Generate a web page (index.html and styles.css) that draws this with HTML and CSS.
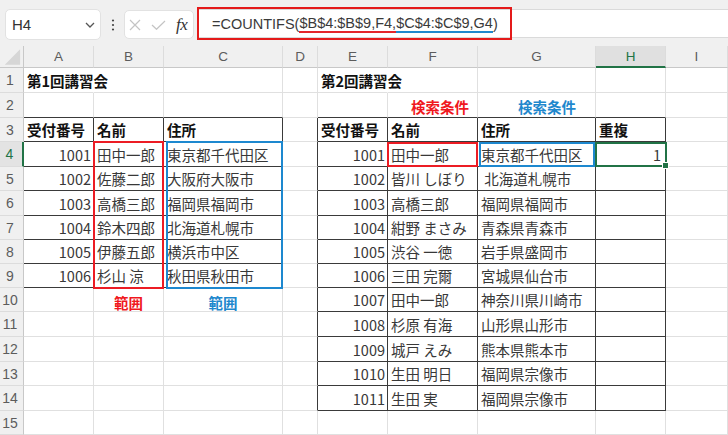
FILE: index.html
```html
<!DOCTYPE html>
<html lang="ja">
<head>
<meta charset="utf-8">
<title>COUNTIFS</title>
<link rel="stylesheet" href="styles.css">
</head>
<body>
<div class="toolbar">
  <div class="namebox"><span>H4</span><svg width="10" height="6" viewBox="0 0 10 6"><path d="M1 1l4 4 4-4" fill="none" stroke="#555" stroke-width="1.3"/></svg></div>
  <div class="dots"><svg width="4" height="12" viewBox="0 0 4 12"><circle cx="2" cy="1.5" r="1.1" fill="#444"/><circle cx="2" cy="6" r="1.1" fill="#444"/><circle cx="2" cy="10.5" r="1.1" fill="#444"/></svg></div>
  <div class="fxgroup">
    <svg class="ic-x" width="12" height="12" viewBox="0 0 12 12"><path d="M1 1L11 11M11 1L1 11" fill="none" stroke="#c4c4c4" stroke-width="1.2"/></svg>
    <svg class="ic-ok" width="15" height="10" viewBox="0 0 15 10"><path d="M1 5l4.5 4.3L14 1" fill="none" stroke="#c4c4c4" stroke-width="1.2"/></svg>
    <span class="fx">fx</span>
  </div>
  <div class="formula">=COUNTIFS(<span class="u-red">$B$4:$B$9,F4,</span><span class="u-blue">$C$4:$C$9,G4</span>)<div class="annot"></div></div>
</div>

<div class="sheet-wrap">
<div class="sheet">
  <div class="h corner"><svg width="24" height="22" viewBox="0 0 24 22"><polygon points="21,3 21,19 5,19" fill="#d6d6d6"/></svg></div>
  <div class="h">A</div><div class="h">B</div><div class="h">C</div><div class="h">D</div><div class="h">E</div><div class="h">F</div><div class="h">G</div><div class="h sel">H</div><div class="h">I</div>

  <div class="rh">1</div>
  <div class="c ov b">第1回講習会</div><div class="c"></div><div class="c"></div><div class="c"></div>
  <div class="c ov b">第2回講習会</div><div class="c"></div><div class="c"></div><div class="c"></div><div class="c"></div>

  <div class="rh">2</div>
  <div class="c tb"></div><div class="c tb"></div><div class="c tb"></div><div class="c"></div>
  <div class="c tb"></div><div class="c tb lbl2 red pf">検索条件</div><div class="c tb lbl2 blue pg">検索条件</div><div class="c tb"></div><div class="c"></div>

  <div class="rh">3</div>
  <div class="c t b">受付番号</div><div class="c t b">名前</div><div class="c t b">住所</div><div class="c tl"></div>
  <div class="c t b">受付番号</div><div class="c t b">名前</div><div class="c t b">住所</div><div class="c t b">重複</div><div class="c"></div>

  <div class="rh sel">4</div>
  <div class="c t n">1001</div><div class="c t">田中一郎</div><div class="c t">東京都千代田区</div><div class="c tl"></div>
  <div class="c t n">1001</div><div class="c t">田中一郎</div><div class="c t">東京都千代田区</div><div class="c t n hv">1</div><div class="c"></div>

  <div class="rh">5</div>
  <div class="c t n">1002</div><div class="c t">佐藤二郎</div><div class="c t">大阪府大阪市</div><div class="c tl"></div>
  <div class="c t n">1002</div><div class="c t">皆川 しぼり</div><div class="c t"> 北海道札幌市</div><div class="c t"></div><div class="c"></div>

  <div class="rh">6</div>
  <div class="c t n">1003</div><div class="c t">高橋三郎</div><div class="c t">福岡県福岡市</div><div class="c tl"></div>
  <div class="c t n">1003</div><div class="c t">高橋三郎</div><div class="c t">福岡県福岡市</div><div class="c t"></div><div class="c"></div>

  <div class="rh">7</div>
  <div class="c t n">1004</div><div class="c t">鈴木四郎</div><div class="c t">北海道札幌市</div><div class="c tl"></div>
  <div class="c t n">1004</div><div class="c t">紺野 まさみ</div><div class="c t">青森県青森市</div><div class="c t"></div><div class="c"></div>

  <div class="rh">8</div>
  <div class="c t n">1005</div><div class="c t">伊藤五郎</div><div class="c t">横浜市中区</div><div class="c tl"></div>
  <div class="c t n">1005</div><div class="c t">渋谷 一徳</div><div class="c t">岩手県盛岡市</div><div class="c t"></div><div class="c"></div>

  <div class="rh">9</div>
  <div class="c t n">1006</div><div class="c t">杉山 涼</div><div class="c t">秋田県秋田市</div><div class="c tl"></div>
  <div class="c t n">1006</div><div class="c t">三田 完爾</div><div class="c t">宮城県仙台市</div><div class="c t"></div><div class="c"></div>

  <div class="rh">10</div>
  <div class="c"></div><div class="c lbl red">範囲</div><div class="c lbl blue">範囲</div><div class="c tl"></div>
  <div class="c t n">1007</div><div class="c t">田中一郎</div><div class="c t">神奈川県川崎市</div><div class="c t"></div><div class="c"></div>

  <div class="rh">11</div>
  <div class="c"></div><div class="c"></div><div class="c"></div><div class="c tl"></div>
  <div class="c t n">1008</div><div class="c t">杉原 有海</div><div class="c t">山形県山形市</div><div class="c t"></div><div class="c"></div>

  <div class="rh">12</div>
  <div class="c"></div><div class="c"></div><div class="c"></div><div class="c tl"></div>
  <div class="c t n">1009</div><div class="c t">城戸 えみ</div><div class="c t">熊本県熊本市</div><div class="c t"></div><div class="c"></div>

  <div class="rh">13</div>
  <div class="c"></div><div class="c"></div><div class="c"></div><div class="c tl"></div>
  <div class="c t n">1010</div><div class="c t">生田 明日</div><div class="c t">福岡県宗像市</div><div class="c t"></div><div class="c"></div>

  <div class="rh">14</div>
  <div class="c"></div><div class="c"></div><div class="c"></div><div class="c tl"></div>
  <div class="c t n">1011</div><div class="c t">生田 実</div><div class="c t">福岡県宗像市</div><div class="c t"></div><div class="c"></div>

  <div class="rh">15</div>
  <div class="c"></div><div class="c"></div><div class="c"></div><div class="c"></div>
  <div class="c"></div><div class="c"></div><div class="c"></div><div class="c"></div><div class="c"></div>
</div>

<div class="marks">
  <div class="box box-b"></div>
  <div class="box box-c"></div>
  <div class="box box-f"></div>
  <div class="box box-g"></div>
  <div class="box sel-h"><span class="handle"></span></div>
</div>
</div>
</body>
</html>
```

FILE: styles.css
```css
html, body {
  margin: 0;
  padding: 0;
}
body {
  width: 728px;
  height: 435px;
  overflow: hidden;
  background: #fff;
  font-family: "Noto Sans CJK JP", "Noto Sans", sans-serif;
}

/* ---------- toolbar ---------- */
.toolbar {
  display: flex;
  align-items: flex-start;
  height: 46px;
  background: #f0f0f0;
}
.namebox {
  box-sizing: border-box;
  margin: 9px 0 0 5px;
  width: 96px;
  height: 31px;
  background: #fff;
  border: 1px solid #e2e2e2;
  border-radius: 5px;
  display: flex;
  align-items: center;
  justify-content: space-between;
  padding: 0 5px 0 6px;
  font: 15px "Liberation Sans", Arial, sans-serif;
  color: #333;
}
.dots {
  width: 23px;
  margin-top: 19px;
  display: flex;
  justify-content: center;
}
.dots svg { display: block; }
.fxgroup {
  box-sizing: border-box;
  margin-top: 10px;
  width: 70px;
  height: 29px;
  background: #fff;
  border: 1px solid #e2e2e2;
  border-radius: 5px;
  display: flex;
  align-items: center;
  padding-left: 4px;
}
.ic-x { display: block; }
.ic-ok { display: block; margin-left: 10px; }
.fx {
  margin-left: 10px;
  font: italic 17px "Liberation Serif", "Times New Roman", serif;
  color: #333;
  letter-spacing: -0.5px;
}
.formula {
  position: relative;
  box-sizing: border-box;
  flex: 1;
  margin: 9px 0 0 3px;
  height: 29px;
  background: #fff;
  border-top: 1px solid #dadada;
  border-bottom: 1px solid #dadada;
  display: flex;
  align-items: center;
  padding-left: 15px;
  font: 14.5px "Liberation Sans", Arial, sans-serif;
  color: #3a3a3a;
  white-space: pre;
}
.u-red { border-bottom: 2px solid #e4262b; }
.u-blue { border-bottom: 2px solid #2089cf; }
.annot {
  position: absolute;
  left: 0;
  top: -3px;
  width: 315px;
  height: 33px;
  box-sizing: border-box;
  border: 2px solid #e41a1a;
}

/* ---------- sheet ---------- */
.sheet-wrap {
  position: relative;
  height: 389px;
  overflow: hidden;
}
.sheet,
.marks {
  display: grid;
  grid-template-columns: 24px 70px 70px 119px 35px 70px 90px 118px 70px 1fr;
  grid-template-rows: 22px 25px 25px 24px 25px 24px 25px 24px 24px 24px 24px 25px 25px 24px 25px 24px;
  height: 389px;
}
.sheet { background: #fff; }
.marks {
  position: absolute;
  inset: 0;
  pointer-events: none;
}
.h {
  box-sizing: border-box;
  background: #f0f0f0;
  border-right: 1px solid #dcdcdc;
  border-bottom: 1px solid #c8c8c8;
  display: flex;
  align-items: center;
  justify-content: center;
  font: 13.5px "Liberation Sans", Arial, sans-serif;
  color: #5c5c5c;
}
.h.corner { border-right: 1px solid #c8c8c8; }
.h.corner svg { display: block; }
.h.sel {
  background: #e0e0e0;
  color: #217346;
  border-bottom: 2px solid #217346;
}
.rh {
  box-sizing: border-box;
  background: #f0f0f0;
  border-right: 1px solid #c8c8c8;
  border-bottom: 1px solid #dcdcdc;
  display: flex;
  align-items: center;
  justify-content: center;
  padding-right: 3px;
  font: 14px "Liberation Sans", Arial, sans-serif;
  color: #5c5c5c;
}
.rh.sel {
  background: #e3e3e3;
  color: #217346;
  border-right: 2px solid #217346;
}

.c {
  box-sizing: border-box;
  border-right: 1px solid #e0e0e0;
  border-bottom: 1px solid #e0e0e0;
  display: flex;
  align-items: center;
  padding: 0 3px;
  font-size: 14.5px;
  color: #383838;
  white-space: pre;
  min-width: 0;
}
.c.t {
  border-right-color: #3a3a3a;
  border-bottom-color: #3a3a3a;
}
.c.tb { border-bottom-color: #3a3a3a; }
.c.tl { border-right-color: #3a3a3a; }
.c.ov {
  border-right-color: transparent;
  overflow: visible;
}
.b { font-weight: 700; color: #111; }
.n { justify-content: flex-end; padding-right: 2px; }
.hv { padding-right: 4px; }

.red { color: #f0181e; }
.blue { color: #1f88cd; }
.lbl {
  justify-content: center;
  font-weight: 700;
  padding-top: 6px;
}
.lbl2 {
  font-weight: 700;
  padding-top: 3px;
}
.pf { padding-left: 23px; }
.pg { padding-left: 40px; }

/* ---------- range highlights ---------- */
.box {
  box-sizing: border-box;
  position: relative;
}
.box-b {
  grid-row: 5 / 11;
  grid-column: 3 / 4;
  margin: -1px 0 -1px -1px;
  border: 2px solid #ec1c24;
}
.box-c {
  grid-row: 5 / 11;
  grid-column: 4 / 5;
  margin: -1px 0 -1px 2px;
  border: 2px solid #1d88cf;
}
.box-f {
  grid-row: 5 / 6;
  grid-column: 7 / 8;
  margin: 0 0 0 -1px;
  border: 2px solid #ec1c24;
}
.box-g {
  grid-row: 5 / 6;
  grid-column: 8 / 9;
  margin: 0 1px 0 1px;
  border: 2px solid #1d88cf;
}
.sel-h {
  grid-row: 5 / 6;
  grid-column: 9 / 10;
  margin: 0 -1px 0 -1px;
  border: 2px solid #217346;
}
.handle {
  position: absolute;
  right: -4px;
  bottom: -4px;
  width: 5px;
  height: 5px;
  background: #217346;
  border: 1px solid #fff;
}
```
